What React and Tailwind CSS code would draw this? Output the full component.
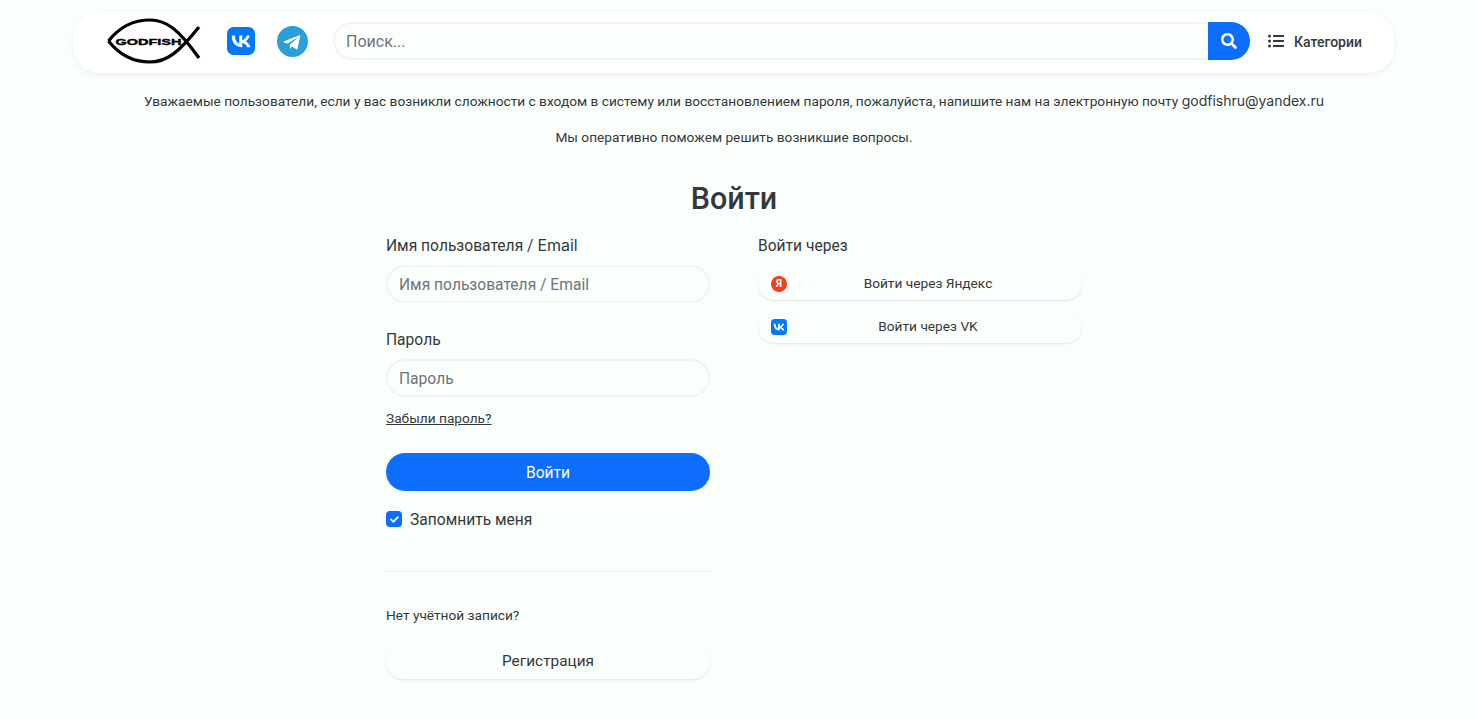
import { FaSearch, FaListUl, FaCheck } from 'react-icons/fa';

function VkIcon({ className }) {
  return (
    <svg viewBox="0 0 48 48" className={className}>
      <rect width="48" height="48" rx="11" fill="#0077ff" />
      <path
        fill="#fff"
        d="M25.54 34.58c-10.94 0-17.18-7.5-17.44-19.98h5.48c.18 9.16 4.22 13.04 7.42 13.84V14.6h5.16v7.9c3.16-.34 6.48-3.94 7.6-7.9h5.16c-.86 4.88-4.46 8.48-7.02 9.96 2.56 1.2 6.66 4.34 8.22 10.02h-5.68c-1.22-3.8-4.26-6.74-8.28-7.14v7.14h-.62z"
      />
    </svg>
  );
}

function TelegramIcon({ className }) {
  return (
    <svg viewBox="0 0 24 24" className={className}>
      <circle cx="12" cy="12" r="12" fill="#2a9fd8" />
      <path
        fill="#fff"
        d="M5.491 11.74l11.57-4.461c.537-.194 1.006.131.832.943l-1.97 9.281c-.146.658-.537.818-1.084.508l-3-2.211-1.447 1.394c-.16.16-.295.295-.605.295l.213-3.053 5.56-5.023c.242-.213-.054-.333-.373-.121l-6.871 4.326-2.962-.924c-.643-.204-.657-.643.136-.953z"
      />
    </svg>
  );
}

function Logo() {
  return (
    <svg viewBox="0 0 94 46" className="h-[46px] w-[94px]">
      <path d="M1.5 23 C 14 7, 28 2, 43 2 C 60 2, 72 12, 92 40" fill="none" stroke="#000" strokeWidth="3.2" />
      <path d="M1.5 23 C 14 39, 28 44, 43 44 C 60 44, 72 34, 92 9" fill="none" stroke="#000" strokeWidth="3.2" />
      <text
        x="8.5"
        y="27"
        fontFamily="'Liberation Sans', sans-serif"
        fontWeight="700"
        fontSize="9.5"
        textLength="66"
        lengthAdjust="spacingAndGlyphs"
        stroke="#000"
        strokeWidth="0.4"
      >
        GODFISH
      </text>
    </svg>
  );
}

function Latin({ children, className }) {
  return <span className={`font-['Inter',sans-serif] ${className}`}>{children}</span>;
}

function SocialButton({ icon, children, className }) {
  return (
    <a className={`flex items-center rounded-[17px] px-[13px] shadow-[0_1px_2px_rgba(0,0,0,0.1)] ${className}`}>
      {icon}
      <span className="flex-1 text-center">{children}</span>
    </a>
  );
}

export default function App() {
  return (
    <div className="min-h-[721px] w-[1476px] overflow-hidden bg-[#fbfffc] pr-2 font-['Roboto',sans-serif] text-[#33383b]">
      <header className="mx-auto mt-3 flex h-[61px] w-[1320px] items-center rounded-[26px] bg-white pb-[3px] pl-[33px] shadow-[0_2px_6px_rgba(0,0,0,0.06)]">
        <Logo />
        <VkIcon className="ml-[26px] h-7 w-7" />
        <TelegramIcon className="ml-[22px] h-[31px] w-[31px]" />
        <div className="ml-[25px] flex h-[38px] w-[917px]">
          <input
            placeholder="Поиск..."
            className="h-full flex-1 rounded-l-full border-2 border-r-0 border-[#f1f4f3] bg-[#fbfffc] pl-[11px] text-[16px] outline-none placeholder:text-[#6c757d]"
          />
          <button className="flex h-full w-[42px] items-center justify-center rounded-r-full bg-[#0d6efd] text-white">
            <FaSearch className="h-4 w-4" />
          </button>
        </div>
        <FaListUl className="ml-[18px] h-4 w-4" />
        <span className="ml-[10px] mt-[2px] text-[14px] font-medium">Категории</span>
      </header>

      <p className="mt-[17px] text-center text-[13.7px] leading-[21px]">
        Уважаемые пользователи, если у вас возникли сложности с входом в систему или восстановлением пароля, пожалуйста, напишите нам на электронную почту <Latin className="text-[14px]">godfishru@yandex.ru</Latin>
      </p>
      <p className="mt-[15px] text-center text-[13.7px] leading-[21px]">Мы оперативно поможем решить возникшие вопросы.</p>

      <h1 className="mt-8 text-center text-[30.5px] font-medium leading-[38px]">Войти</h1>

      <div className="mx-auto mt-[15px] flex w-[696px] gap-12">
        <form className="w-[324px]">
          <label className="block text-[15.6px] leading-6">Имя пользователя / <Latin className="text-[16px]">Email</Latin></label>
          <input
            placeholder="Имя пользователя / Email"
            className="mt-[7px] block h-[38px] w-full rounded-full border-2 border-[#f1f4f3] bg-transparent px-[11px] pt-[2px] text-[15.6px] outline-none placeholder:text-[#6c757d]"
          />
          <label className="mt-[25px] block text-[15.6px] leading-6">Пароль</label>
          <input
            placeholder="Пароль"
            className="mt-[7px] block h-[38px] w-full rounded-full border-2 border-[#f1f4f3] bg-transparent px-[11px] pt-[2px] text-[15.6px] outline-none placeholder:text-[#6c757d]"
          />
          <a className="mt-[11px] block text-[13.7px] leading-[21px] underline">Забыли пароль?</a>
          <button type="button" className="mt-6 block h-[38px] w-full rounded-full bg-[#0d6efd] pt-[3px] text-[15.6px] text-white">
            Войти
          </button>
          <div className="mt-5 flex items-start gap-2">
            <span className="flex h-4 w-4 items-center justify-center rounded-[4px] bg-[#0d6efd] text-white">
              <FaCheck className="h-[9px] w-[9px]" />
            </span>
            <span className="pt-px text-[15.6px] leading-4">Запомнить меня</span>
          </div>
          <hr className="mt-[43px] border-[#e9eeec]" />
          <p className="mt-[33px] text-[13.7px] leading-[21px]">Нет учётной записи?</p>
          <SocialButton className="mt-[17px] h-9 pt-[2px] text-[15.4px]">Регистрация</SocialButton>
        </form>

        <div className="w-[324px] pt-px">
          <p className="text-[15.6px] leading-6">Войти через</p>
          <div className="mt-[9px] flex flex-col gap-[10px]">
            <SocialButton
              className="h-[33px] text-[13.7px]"
              icon={
                <span className="flex h-4 w-4 items-center justify-center rounded-full bg-[#f0401d] text-[10px] font-bold text-white">Я</span>
              }
            >
              Войти через Яндекс
            </SocialButton>
            <SocialButton className="h-[33px] text-[13.7px]" icon={<VkIcon className="h-4 w-4" />}>
              Войти через VK
            </SocialButton>
          </div>
        </div>
      </div>
    </div>
  );
}
